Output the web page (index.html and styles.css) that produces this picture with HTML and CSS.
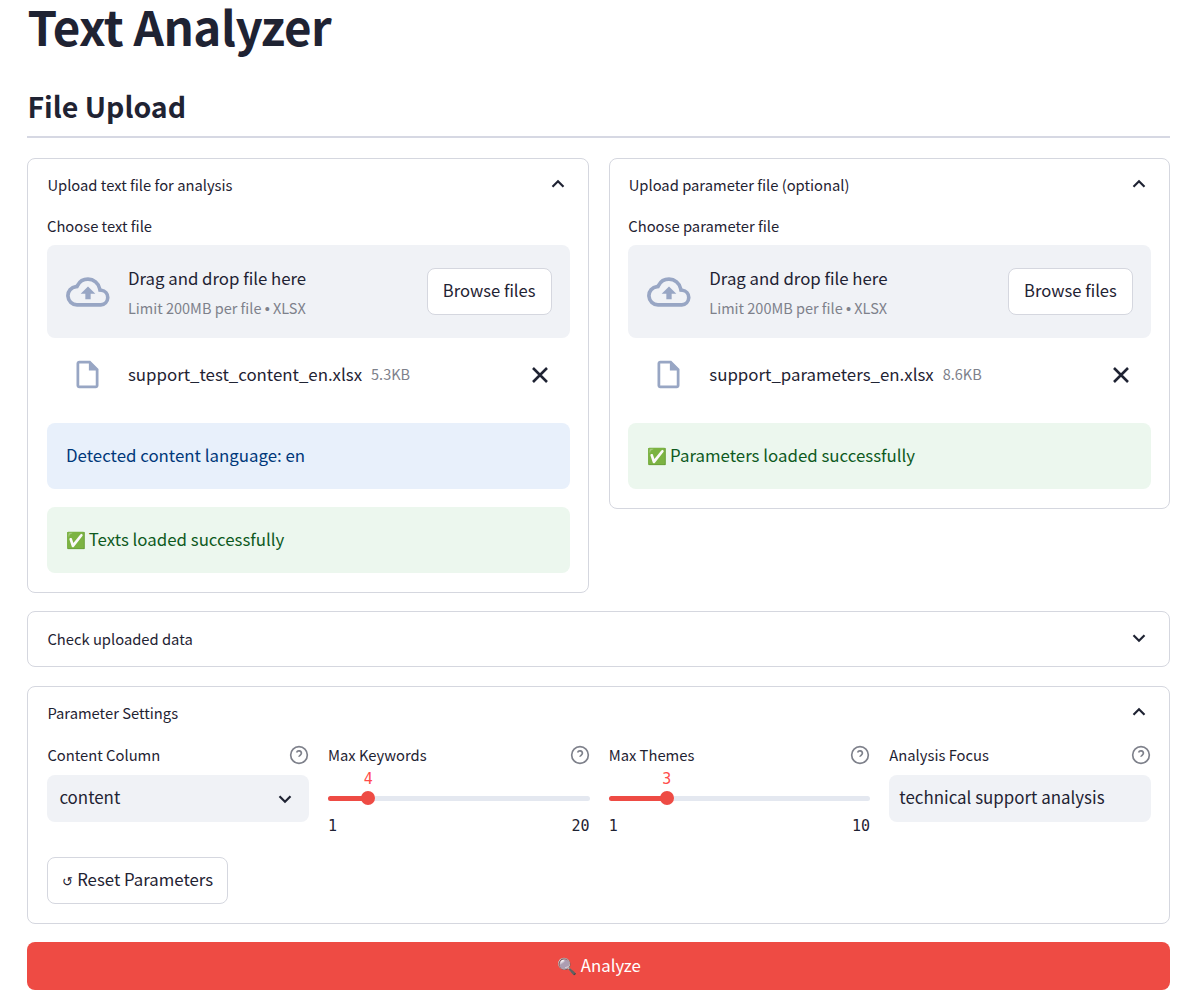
FILE: index.html
```html
<!DOCTYPE html>
<html>
	<head>
		<title>Text Analyzer</title>
		<meta charset="UTF-8">
		<link rel="stylesheet" href="styles.css">
	</head>
	<body>
		<h1 class="page-title">Text Analyzer</h1>
		<h2 class="section-title">File Upload</h2>

		<div class="upload-columns">
			<!-- 文本文件 -->
			<section class="expander">
				<div class="expander-head">
					<span>Upload text file for analysis</span>
					<svg class="chevron" viewBox="0 0 24 24"><path d="M6 15l6-6 6 6"/></svg>
				</div>
				<div class="expander-body">
					<div class="field-label">Choose text file</div>
					<div class="dropzone">
						<svg class="cloud-icon" viewBox="0 0 24 24"><path d="M19.35 10.04A7.49 7.49 0 0 0 12 4a7.5 7.5 0 0 0-6.65 4.04A6 6 0 0 0 6 20h13a5 5 0 0 0 .35-9.96zM19 18H6a4 4 0 0 1-.44-7.97l1.07-.11.5-.95A5.46 5.46 0 0 1 12 6a5.5 5.5 0 0 1 5.39 4.43l.3 1.5 1.53.11A3 3 0 0 1 19 18zM8 13h2.55v3h2.9v-3H16l-4-4z"/></svg>
						<div class="drop-text">
							<div class="drop-title">Drag and drop file here</div>
							<div class="drop-limit">Limit 200MB per file <span class="dot">•</span> XLSX</div>
						</div>
						<button class="btn">Browse files</button>
					</div>
					<div class="file-row">
						<svg class="file-icon" viewBox="0 0 24 24"><path d="M14 2H6c-1.1 0-1.99.9-1.99 2L4 20c0 1.1.89 2 1.99 2H18c1.1 0 2-.9 2-2V8l-6-6zm4 18H6V4h7v5h5v11z"/></svg>
						<span class="file-name">support_test_content_en.xlsx</span>
						<span class="file-size">5.3KB</span>
						<svg class="close-icon" viewBox="0 0 24 24"><path d="M6 6l12 12M18 6L6 18"/></svg>
					</div>
					<div class="alert alert-info">Detected content language: en</div>
					<div class="alert alert-ok"><span class="emoji">✅</span> Texts loaded successfully</div>
				</div>
			</section>

			<!-- 参数文件 -->
			<section class="expander">
				<div class="expander-head">
					<span>Upload parameter file (optional)</span>
					<svg class="chevron" viewBox="0 0 24 24"><path d="M6 15l6-6 6 6"/></svg>
				</div>
				<div class="expander-body">
					<div class="field-label">Choose parameter file</div>
					<div class="dropzone">
						<svg class="cloud-icon" viewBox="0 0 24 24"><path d="M19.35 10.04A7.49 7.49 0 0 0 12 4a7.5 7.5 0 0 0-6.65 4.04A6 6 0 0 0 6 20h13a5 5 0 0 0 .35-9.96zM19 18H6a4 4 0 0 1-.44-7.97l1.07-.11.5-.95A5.46 5.46 0 0 1 12 6a5.5 5.5 0 0 1 5.39 4.43l.3 1.5 1.53.11A3 3 0 0 1 19 18zM8 13h2.55v3h2.9v-3H16l-4-4z"/></svg>
						<div class="drop-text">
							<div class="drop-title">Drag and drop file here</div>
							<div class="drop-limit">Limit 200MB per file <span class="dot">•</span> XLSX</div>
						</div>
						<button class="btn">Browse files</button>
					</div>
					<div class="file-row">
						<svg class="file-icon" viewBox="0 0 24 24"><path d="M14 2H6c-1.1 0-1.99.9-1.99 2L4 20c0 1.1.89 2 1.99 2H18c1.1 0 2-.9 2-2V8l-6-6zm4 18H6V4h7v5h5v11z"/></svg>
						<span class="file-name">support_parameters_en.xlsx</span>
						<span class="file-size">8.6KB</span>
						<svg class="close-icon" viewBox="0 0 24 24"><path d="M6 6l12 12M18 6L6 18"/></svg>
					</div>
					<div class="alert alert-ok"><span class="emoji">✅</span> Parameters loaded successfully</div>
				</div>
			</section>
		</div>

		<section class="expander expander-check">
			<div class="expander-head">
				<span>Check uploaded data</span>
				<svg class="chevron" viewBox="0 0 24 24"><path d="M6 9l6 6 6-6"/></svg>
			</div>
		</section>

		<section class="expander expander-params">
			<div class="expander-head">
				<span>Parameter Settings</span>
				<svg class="chevron" viewBox="0 0 24 24"><path d="M6 15l6-6 6 6"/></svg>
			</div>
			<div class="expander-body">
				<div class="param-grid">
					<div class="param">
						<div class="param-label"><span>Content Column</span><svg class="help-icon" viewBox="0 0 24 24"><circle cx="12" cy="12" r="10"/><path d="M9.1 9a3 3 0 0 1 5.8 1c0 2-3 2.6-3 4.2"/><path d="M12 17.5v.01"/></svg></div>
						<div class="select-box"><span>content</span><svg class="select-arrow" viewBox="0 0 24 24"><path d="M6 9l6 6 6-6"/></svg></div>
					</div>
					<div class="param">
						<div class="param-label"><span>Max Keywords</span><svg class="help-icon" viewBox="0 0 24 24"><circle cx="12" cy="12" r="10"/><path d="M9.1 9a3 3 0 0 1 5.8 1c0 2-3 2.6-3 4.2"/><path d="M12 17.5v.01"/></svg></div>
						<div class="slider">
							<div class="slider-track"><div class="slider-fill" style="width: 15.4%"><span class="slider-thumb"><span class="slider-value">4</span></span></div></div>
							<div class="slider-ends"><span>1</span><span>20</span></div>
						</div>
					</div>
					<div class="param">
						<div class="param-label"><span>Max Themes</span><svg class="help-icon" viewBox="0 0 24 24"><circle cx="12" cy="12" r="10"/><path d="M9.1 9a3 3 0 0 1 5.8 1c0 2-3 2.6-3 4.2"/><path d="M12 17.5v.01"/></svg></div>
						<div class="slider">
							<div class="slider-track"><div class="slider-fill" style="width: 22.2%"><span class="slider-thumb"><span class="slider-value">3</span></span></div></div>
							<div class="slider-ends"><span>1</span><span>10</span></div>
						</div>
					</div>
					<div class="param">
						<div class="param-label"><span>Analysis Focus</span><svg class="help-icon" viewBox="0 0 24 24"><circle cx="12" cy="12" r="10"/><path d="M9.1 9a3 3 0 0 1 5.8 1c0 2-3 2.6-3 4.2"/><path d="M12 17.5v.01"/></svg></div>
						<div class="select-box text-box">technical support analysis</div>
					</div>
				</div>
				<button class="btn btn-reset"><span class="reset-arrow">↺</span> Reset Parameters</button>
			</div>
		</section>

		<button class="btn-analyze"><span class="emoji">🔍</span> Analyze</button>
	</body>
</html>
```

FILE: styles.css
```css
* {
	margin: 0;
	padding: 0;
	box-sizing: border-box;
}

body {
	width: 1200px;
	height: 1006px;
	overflow: hidden;
	padding: 0 29.6px 0 27.4px;
	background-color: #fff;
	color: #1f2333;
	font-family: "Noto Sans CJK SC", "Noto Sans", sans-serif;
	font-size: 16px;
	line-height: 24px;
}

.page-title {
	margin-bottom: 9px;
	font-size: 47.5px;
	line-height: 51px;
	font-weight: 700;
	letter-spacing: -0.5px;
}

.section-title {
	height: 78px;
	padding-top: 23px;
	border-bottom: 2px solid #d6d8e3;
	font-size: 28.5px;
	line-height: 46px;
	font-weight: 600;
}

.upload-columns {
	display: flex;
	align-items: flex-start;
	gap: 19.6px;
	margin-top: 20px;
}

.upload-columns .expander {
	flex: 1;
}

.upload-columns .expander-body {
	padding: 4px 18.6px 19px;
}

.expander {
	border: 1px solid #d5d7df;
	border-radius: 8px;
}

.expander-head {
	display: flex;
	align-items: center;
	justify-content: space-between;
	height: 52px;
	padding: 0 19px;
	font-size: 14.75px;
}

.chevron {
	width: 22px;
	height: 22px;
	margin-top: -2px;
	fill: none;
	stroke: #1f2333;
	stroke-width: 2.4;
}

.expander-body {
	padding: 5px 18.6px 19px 19px;
}

.field-label {
	height: 21px;
	font-size: 14.75px;
	line-height: 21px;
}

.dropzone {
	display: flex;
	align-items: center;
	height: 93px;
	margin-top: 9px;
	padding: 0 18px 0 19px;
	border-radius: 8px;
	background-color: #f0f2f6;
}

.cloud-icon {
	width: 44px;
	height: 44px;
	fill: #98a6c4;
	flex: none;
}

.drop-text {
	flex: 1;
	margin-left: 18px;
	padding-top: 2px;
}

.drop-title {
	font-size: 16.8px;
	line-height: 26px;
}

.drop-limit {
	margin-top: 6px;
	color: #7e818b;
	font-size: 14.5px;
	line-height: 22px;
}

.dot {
	font-family: "Liberation Sans", sans-serif;
}

.btn {
	height: 47px;
	padding: 0 15px 3px;
	border: 1px solid #d5d7df;
	border-radius: 8px;
	background-color: #fff;
	color: #1f2333;
	font-family: inherit;
	font-size: 16.6px;
}

.file-row {
	display: flex;
	align-items: center;
	height: 72px;
	padding-left: 24px;
	margin-bottom: 13px;
}

.file-icon {
	width: 33px;
	height: 33px;
	fill: #98a6c4;
	flex: none;
}

.file-name {
	margin-left: 24px;
	margin-bottom: 1px;
	font-size: 16.85px;
}

.file-size {
	margin-left: 9px;
	margin-bottom: 1px;
	color: #7e818b;
	font-size: 14.5px;
}

.close-icon {
	width: 28px;
	height: 28px;
	margin-top: 2px;
	margin-left: auto;
	margin-right: 16px;
	fill: none;
	stroke: #1f2333;
	stroke-width: 2.2;
}

.alert {
	display: flex;
	align-items: center;
	height: 66px;
	padding: 0 19px 2px;
	border-radius: 8px;
	font-size: 16.85px;
	white-space: pre;
}

.emoji {
	font-size: 16px;
}

.alert .emoji {
	margin-right: -1px;
}

.alert-info {
	background-color: #e8f0fb;
	color: #00387a;
}

.alert-ok {
	background-color: #ecf7ee;
	color: #0e5a1e;
}

.alert-info + .alert-ok {
	margin-top: 18px;
}

.expander-check {
	height: 56px;
	margin-top: 18px;
}

.expander-check .expander-head {
	height: 54px;
}

.expander-params {
	height: 238px;
	margin-top: 19px;
}

.param-grid {
	display: grid;
	grid-template-columns: repeat(4, 1fr);
	gap: 19.2px;
}

.param-label {
	display: flex;
	align-items: center;
	justify-content: space-between;
	height: 21px;
	font-size: 14.75px;
}

.help-icon {
	width: 20px;
	height: 20px;
	fill: none;
	stroke: #7e818b;
	stroke-width: 2;
}

.select-box {
	display: flex;
	align-items: center;
	justify-content: space-between;
	height: 47px;
	margin-top: 10px;
	padding: 0 13px 3px 12px;
	border-radius: 8px;
	background-color: #f0f2f6;
	font-size: 16.9px;
}

.text-box {
	padding: 0 10px 3px;
}

.select-arrow {
	width: 22px;
	height: 22px;
	margin-top: 3px;
	fill: none;
	stroke: #1f2333;
	stroke-width: 2.4;
}

.slider {
	padding-top: 31px;
}

.slider-track {
	height: 5px;
	border-radius: 3px;
	background-color: #e4e8f0;
}

.slider-fill {
	position: relative;
	height: 5px;
	border-radius: 3px;
	background-color: #ee4b44;
}

.slider-thumb {
	position: absolute;
	top: -5px;
	right: -7px;
	width: 14px;
	height: 14px;
	border-radius: 50%;
	background-color: #ee4b44;
}

.slider-value {
	position: absolute;
	top: -24px;
	left: 0;
	width: 14px;
	text-align: center;
	color: #ff4b4b;
	font-family: "DejaVu Sans Mono", monospace;
	font-size: 15px;
}

.slider-ends {
	display: flex;
	justify-content: space-between;
	margin-top: 13px;
	font-family: "DejaVu Sans Mono", monospace;
	font-size: 15px;
}

.btn-reset {
	display: block;
	margin-top: 19px;
	padding: 0 14px 3px;
	font-size: 16.8px;
}

.reset-arrow {
	font-size: 13px;
}

.btn-analyze {
	display: block;
	width: 100%;
	height: 48px;
	margin-top: 18px;
	padding-bottom: 3px;
	border: none;
	border-radius: 8px;
	background-color: #ee4b44;
	color: #fff;
	font-family: inherit;
	font-size: 16.8px;
}
```
